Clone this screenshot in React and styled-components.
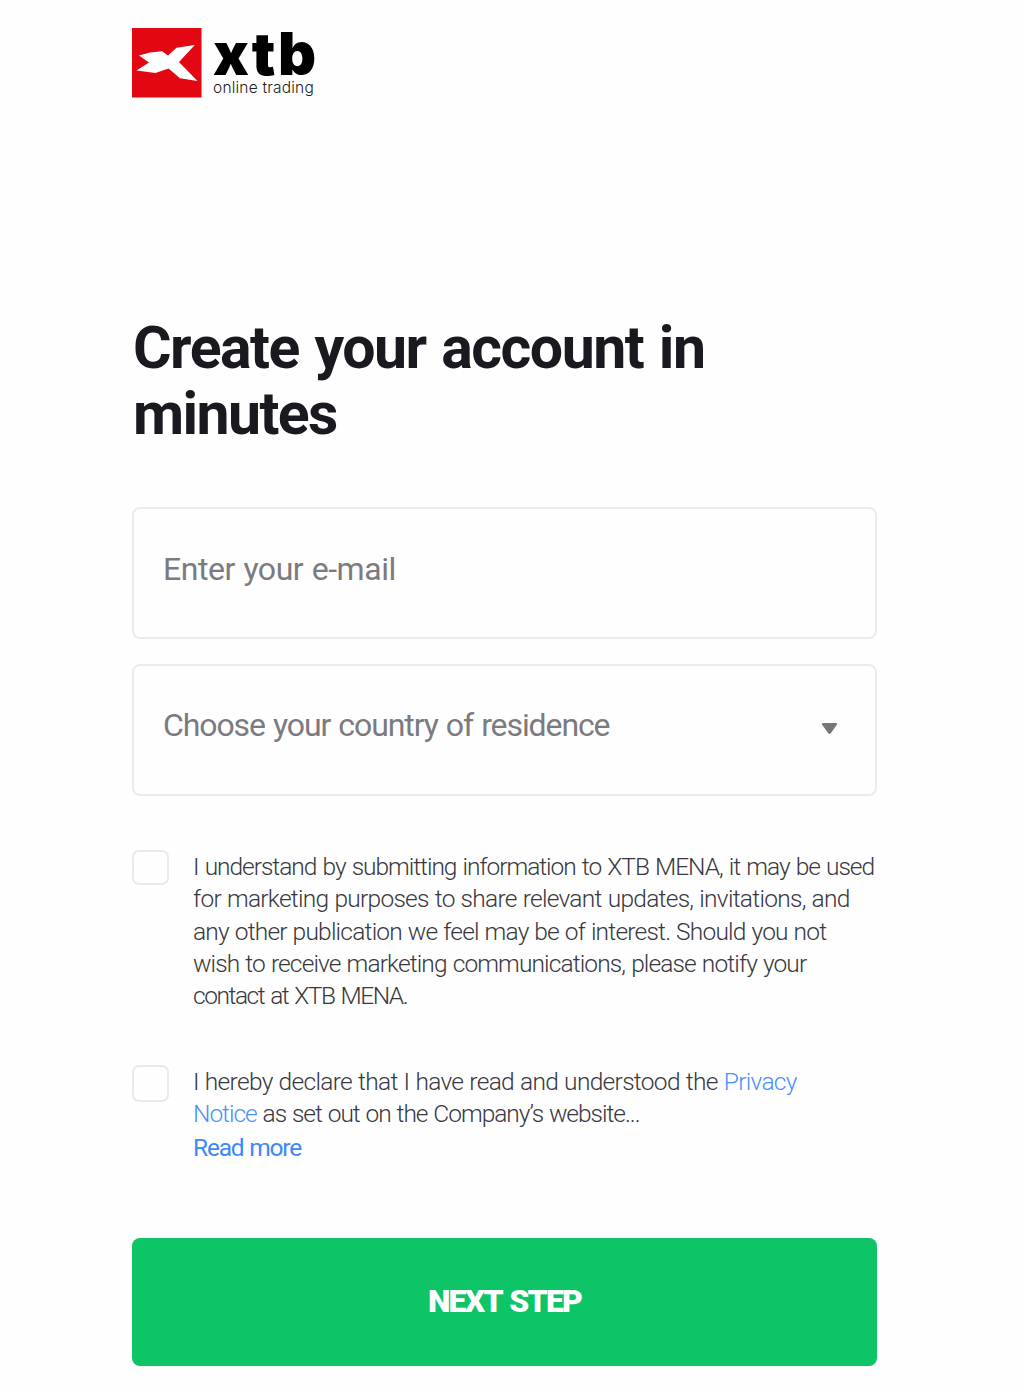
import React from "react";
import styled, { createGlobalStyle } from "styled-components";

const GlobalStyle = createGlobalStyle`
  * { box-sizing: border-box; }
  body { margin: 0; background: #fefefe; font-family: Roboto, "Liberation Sans", sans-serif; }
`;

const Page = styled.main`
  width: 1024px;
  height: 1392px;
  padding: 28px 147px 0 132px;
  background: #fefefe;
  overflow: hidden;
`;

const Brand = styled.header`
  display: flex;
  gap: 11.5px;
  height: 70px;
  font-family: Inter, "Liberation Sans", sans-serif;
`;

const Wordmark = styled.div`
  display: flex;
  flex-direction: column;
  white-space: nowrap;
`;

const BrandName = styled.span`
  height: 51px;
  font-size: 59px;
  line-height: 51px;
  font-weight: 900;
  letter-spacing: 2.3px;
  color: #000;
`;

const Tagline = styled.span`
  font-size: 15.5px;
  line-height: 18px;
  font-weight: 300;
  letter-spacing: 0.2px;
  color: #222;
`;

const Form = styled.form`
  display: flex;
  flex-direction: column;
  margin-top: 217px;
`;

const Title = styled.h1`
  margin: 0 0 60px;
  padding-left: 1px;
  font-size: 59px;
  line-height: 66px;
  font-weight: 700;
  color: #1a1920;
`;

const Line = styled.span`
  display: block;
  white-space: nowrap;
  letter-spacing: ${(p) => p.$track || 0}px;
  word-spacing: ${(p) => p.$words || 0}px;
`;

const field = `
  width: 745px;
  height: 132px;
  border: 2px solid #ebebec;
  border-radius: 8px;
  background: #fefefe;
  color: #7b7b7f;
  font-size: 32px;
`;

const EmailInput = styled.input`
  ${field}
  display: block;
  margin-bottom: 25px;
  padding: 0 30px 8px 29px;
  font-family: inherit;
  letter-spacing: -0.45px;
  word-spacing: 1px;
  outline: none;
  &::placeholder { color: #7b7b7f; opacity: 1; }
`;

const CountrySelect = styled.div`
  ${field}
  display: flex;
  align-items: center;
  justify-content: space-between;
  padding: 0 37px 10px 29px;
  svg { margin-top: 6px; }
`;

const Consent = styled.div`
  display: flex;
  align-items: flex-start;
  gap: 24px;
  margin-top: ${(p) => p.$top}px;
`;

const Checkbox = styled.button`
  flex: none;
  width: 37px;
  height: ${(p) => p.$height}px;
  padding: 0;
  border: 2px solid #e9e9ea;
  border-radius: 7px;
  background: #fefefe;
`;

const Copy = styled.div`
  padding-top: ${(p) => p.$top}px;
  font-size: 24.5px;
  line-height: 32.15px;
  font-weight: 350;
  color: #38383e;
`;

const Link = styled.a`
  color: #4a90ff;
`;

const ReadMore = styled.a`
  display: block;
  margin-top: 2px;
  font-weight: 400;
  color: #3d88fb;
`;

const Submit = styled.button`
  width: 745px;
  height: 128px;
  margin-top: 74px;
  padding: 0 0 2px;
  border: 0;
  border-radius: 8px;
  background: #0dc566;
  color: #fff;
  font: 900 32px/1 Roboto, sans-serif;
  letter-spacing: -1.75px;
  word-spacing: 2px;
`;

const BirdMark = () => (
  <svg width="69.500" height="69.500" viewBox="0 0 69.500 69.500" aria-hidden="true">
    <rect width="69.500" height="69.500" fill="#e30713" />
    <path fill="#fff" d="M7 27.500 18 24.500 30 23.200 36 27.500 44.500 19.700 62.800 17 47 34 65.500 53 48 50.200 36.500 40.500 23.500 45 4.500 42.500 17 34.500Z" />
  </svg>
);

export default function App() {
  return (
    <Page>
      <GlobalStyle />
      <Brand>
        <BirdMark />
        <Wordmark>
          <BrandName>xtb</BrandName>
          <Tagline>online trading</Tagline>
        </Wordmark>
      </Brand>
      <Form onSubmit={(e) => e.preventDefault()}>
        <Title>
          <Line $track={-1.5} $words={2.4}>Create your account in</Line>
          <Line $track={-1.6}>minutes</Line>
        </Title>
        <EmailInput type="email" placeholder="Enter your e-mail" aria-label="E-mail" />
        <CountrySelect role="combobox" aria-label="Country of residence">
          <Line $track={-1.1} $words={1.3}>Choose your country of residence</Line>
          <svg width="17" height="13" viewBox="0 0 17 13">
            <path d="M2 1H15Q17 1 15.800 2.800L10 11Q8.500 13 7 11L1.200 2.800Q0 1 2 1Z" fill="#76767b" />
          </svg>
        </CountrySelect>
        <Consent $top={54}>
          <Checkbox type="button" role="checkbox" aria-checked="false" $height={35} />
          <Copy $top={1.3}>
            <Line $track={-1.03} $words={1.2}>I understand by submitting information to XTB MENA, it may be used</Line>
            <Line $track={-0.72} $words={0.7}>for marketing purposes to share relevant updates, invitations, and</Line>
            <Line $track={-0.78} $words={0.6}>any other publication we feel may be of interest. Should you not</Line>
            <Line $track={-0.88} $words={0.9}>wish to receive marketing communications, please notify your</Line>
            <Line $track={-1.45} $words={1.4}>contact at XTB MENA.</Line>
          </Copy>
        </Consent>
        <Consent $top={53}>
          <Checkbox type="button" role="checkbox" aria-checked="false" $height={37} />
          <Copy $top={0.5}>
            <Line $track={-0.69} $words={0.7}>I hereby declare that I have read and understood the <Link>Privacy</Link></Line>
            <Line $track={-1.02} $words={0.9}><Link>Notice</Link> as set out on the Company’s website...</Line>
            <ReadMore><Line $track={-1.2} $words={1}>Read more</Line></ReadMore>
          </Copy>
        </Consent>
        <Submit type="submit">NEXT STEP</Submit>
      </Form>
    </Page>
  );
}
